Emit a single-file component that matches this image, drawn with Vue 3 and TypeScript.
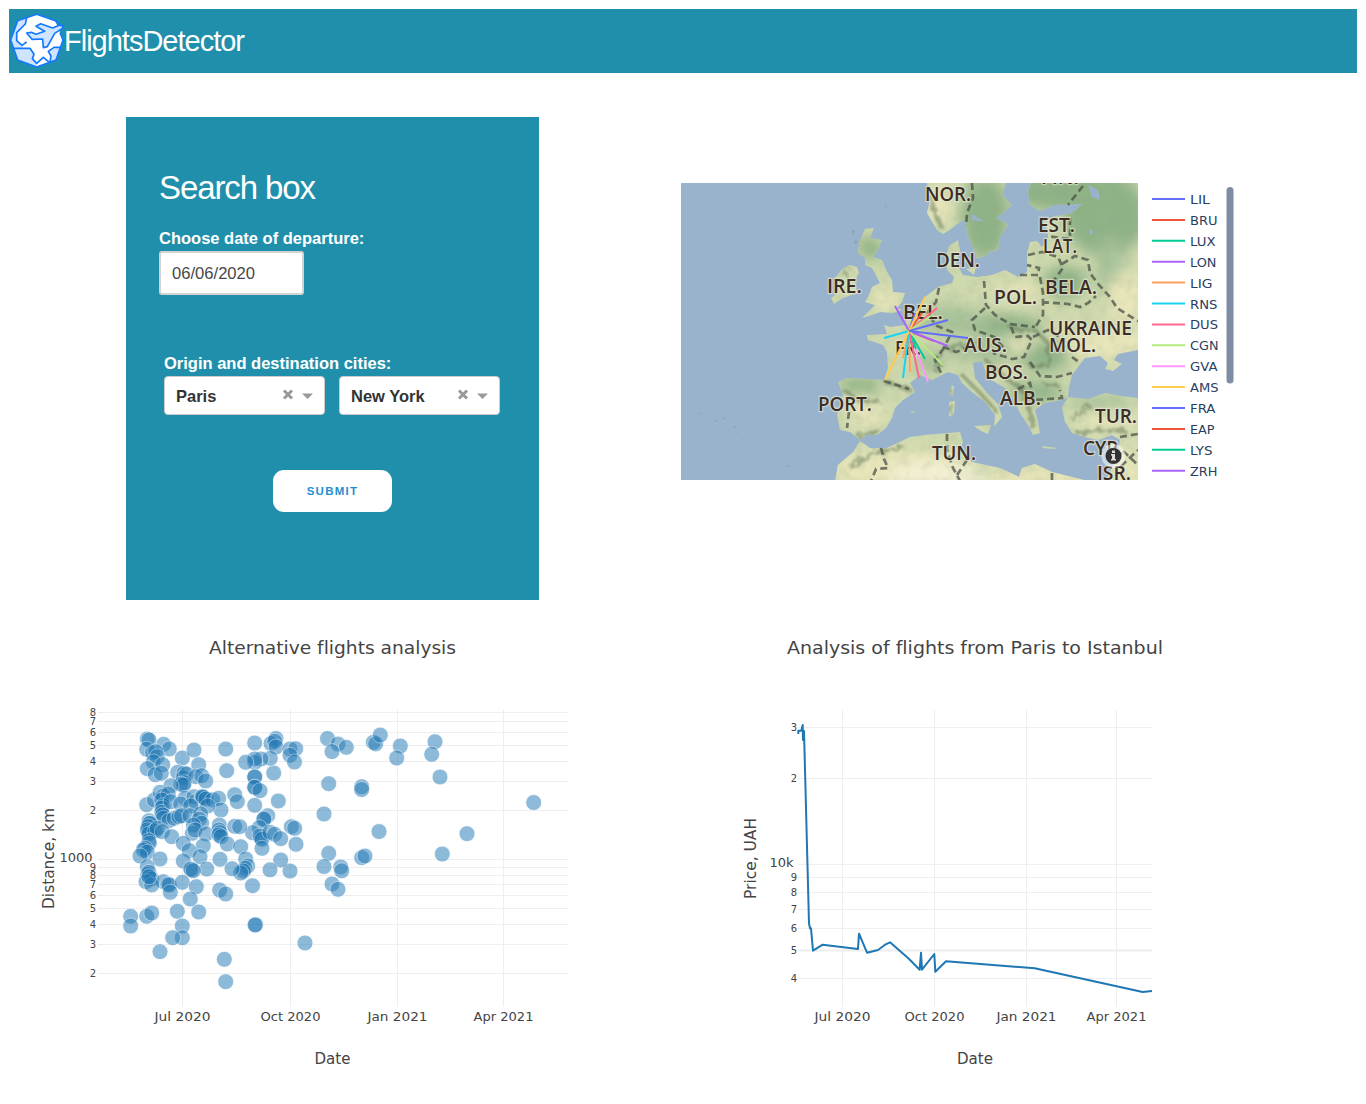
<script setup lang="ts">
interface Tick { label: string; at: number; width?: number }
interface Route { code: string; color: string; width: number }
interface MapLabel { text: string; x: number; y: number; w: number }

const palette = ['#636efa', '#ef553b', '#00cc96', '#ab63fa', '#ffa15a', '#19d3f3', '#ff6692', '#b6e880', '#ff97ff', '#fecb52']

const codes: [string, number][] = [
  ['LIL', 20], ['BRU', 27.5], ['LUX', 25.5], ['LON', 26.5], ['LIG', 22.5], ['RNS', 27.5], ['DUS', 28],
  ['CGN', 28.5], ['GVA', 27.5], ['AMS', 28.5], ['FRA', 25.5], ['EAP', 24.5], ['LYS', 22.5], ['ZRH', 27.5],
]
const routes: Route[] = codes.map(([code, width], i) => ({ code, width, color: palette[i % palette.length] }))

const rays: [number, number, string][] = [
  [915, 313, '#636efa'], [922, 313, '#ef553b'], [925, 359, '#00cc96'], [895, 306, '#ab63fa'],
  [903, 358, '#ffa15a'], [884, 338, '#19d3f3'], [937, 308, '#ff6692'], [932, 315, '#b6e880'],
  [928, 382, '#ff97ff'], [925, 297, '#fecb52'], [948, 320, '#636efa'], [934, 341, '#ef553b'],
  [916, 349, '#00cc96'], [948, 346, '#ab63fa'], [910, 372, '#ffa15a'], [903, 378, '#19d3f3'],
  [919, 378, '#ff6692'], [943, 365, '#b6e880'], [885, 380, '#fecb52'], [968, 338, '#636efa'],
]

const mapLabels: MapLabel[] = [
  { text: 'FIN.', x: 1041, y: 184, w: 38 },
  { text: 'NOR.', x: 925, y: 201, w: 46 }, { text: 'EST.', x: 1038, y: 232, w: 37 },
  { text: 'LAT.', x: 1043, y: 253, w: 34 }, { text: 'DEN.', x: 936, y: 267, w: 44 },
  { text: 'IRE.', x: 827, y: 293, w: 35 }, { text: 'POL.', x: 994, y: 304, w: 43 },
  { text: 'BELA.', x: 1045, y: 294, w: 52 }, { text: 'BEL.', x: 903, y: 319, w: 40 },
  { text: 'UKRAINE', x: 1049, y: 335, w: 83 }, { text: 'MOL.', x: 1049, y: 352, w: 47 },
  { text: 'FR.', x: 895, y: 355, w: 26 }, { text: 'AUS.', x: 964, y: 352, w: 43 },
  { text: 'BOS.', x: 985, y: 379, w: 43 }, { text: 'ALB.', x: 1000, y: 405, w: 41 },
  { text: 'PORT.', x: 818, y: 411, w: 54 }, { text: 'TUR.', x: 1095, y: 423, w: 42 },
  { text: 'TUN.', x: 932, y: 460, w: 44 }, { text: 'CYP.', x: 1083, y: 455, w: 40 },
  { text: 'ISR.', x: 1097, y: 480, w: 34 },
]

const scatterX: Tick[] = [
  { label: 'Jul 2020', at: 182.5, width: 56 }, { label: 'Oct 2020', at: 290.5, width: 60 },
  { label: 'Jan 2021', at: 397.5, width: 60 }, { label: 'Apr 2021', at: 503.5, width: 60 },
]
const scatterY: Tick[] = [
  { label: '8', at: 712.5 }, { label: '7', at: 721.5 }, { label: '6', at: 732.5 }, { label: '5', at: 745.5 },
  { label: '4', at: 761.5 }, { label: '3', at: 781.5 }, { label: '2', at: 810.5 }, { label: '1000', at: 859.5 },
  { label: '9', at: 867.5 }, { label: '8', at: 875.5 }, { label: '7', at: 884.5 }, { label: '6', at: 895.5 },
  { label: '5', at: 908.5 }, { label: '4', at: 924.5 }, { label: '3', at: 944.5 }, { label: '2', at: 973.5 },
]
const priceX: Tick[] = [
  { label: 'Jul 2020', at: 842.5, width: 56 }, { label: 'Oct 2020', at: 934.5, width: 60 },
  { label: 'Jan 2021', at: 1026.5, width: 60 }, { label: 'Apr 2021', at: 1116.5, width: 60 },
]
const priceY: Tick[] = [
  { label: '3', at: 727.5 }, { label: '2', at: 778.5 }, { label: '10k', at: 864.5 }, { label: '9', at: 877.5 },
  { label: '8', at: 892.5 }, { label: '7', at: 909.5 }, { label: '6', at: 928.5 }, { label: '5', at: 950.5 },
  { label: '4', at: 978.5 },
]

const points: [number, number][] = [
  [147.3, 739], [149, 740], [163.7, 744.3], [169.3, 749], [146.7, 749.3], [152.7, 752.7], [155.7, 751.7],
  [157.3, 756.7], [153.3, 762], [162.7, 764.7], [147.3, 768.7], [155.3, 774.7], [161.3, 773.3], [182.3, 758],
  [194, 750], [198.7, 764.7], [225.7, 749], [226.7, 770.7], [177.7, 772.3], [184, 773.3], [183.3, 777.7],
  [186.7, 774], [195.7, 776.7], [201.7, 775.7], [205.7, 781], [184.3, 782.7], [181, 784.3], [183.5, 785],
  [171, 785.7], [146.7, 804.7], [154.3, 800], [160, 792.3], [163.3, 796], [168.3, 794], [161.7, 800],
  [163.3, 805.7], [162, 808], [161.7, 812.3], [162.7, 815], [163.3, 818.3], [169, 820.7], [171, 801.7],
  [185, 798.3], [194, 796.7], [195.7, 801.7], [202.3, 796.7], [202.3, 796.7], [203.3, 797.3], [206, 799],
  [212.7, 799.8], [218.7, 798.3], [221, 810], [207.7, 806], [180.7, 804], [190.7, 806], [174.3, 818.3],
  [179, 816.7], [181.7, 815.7], [190, 815.7], [200.7, 814], [199.3, 819.3], [201.7, 823.3], [193.3, 825],
  [149, 820.7], [150, 823.3], [149.5, 823.5], [148.3, 826.7], [149, 831.7], [147.3, 830], [149, 834],
  [155, 831], [157.3, 828.3], [162.3, 831.7], [171.7, 836.7], [192.3, 833.3], [195, 830], [206, 834],
  [219.3, 825], [219, 830], [220, 832.7], [219, 835], [221, 836.7], [227.3, 844], [203.3, 845.7],
  [183.3, 843.3], [149, 840.7], [149.3, 843.3], [145, 848.3], [143.3, 850], [147.3, 852.3], [140, 856],
  [160, 859], [189.3, 850.7], [183.3, 861], [200, 856.7], [220, 859.3], [191.7, 870], [190.7, 869],
  [206.7, 869], [147.3, 866.7], [147.7, 874.3], [149, 872.3], [151.7, 879], [193.3, 870.7], [163.3, 881.7],
  [168, 884.3], [169.3, 885], [170.3, 892.3], [182.3, 882.3], [196.3, 886.7], [146, 881.7], [151.7, 885],
  [149, 876.7], [190.3, 899], [219.7, 890], [225.7, 894], [130.7, 916.3], [130.7, 926], [146.7, 916.3],
  [151.7, 913], [177.3, 911.3], [198.7, 912], [182.3, 926], [182.3, 937.7], [172.7, 937.7], [160, 951.7],
  [224.3, 959.3], [225.7, 981.7], [255.7, 924.7], [255, 925], [305, 943],
  [254.7, 743], [276, 738.5], [271, 743.5], [274.7, 741.3], [276, 747], [290, 749], [295.7, 748.7],
  [290, 755.3], [294.5, 762], [327.5, 738.5], [338, 744], [346.3, 747.3], [332, 751.6], [373.3, 742.3],
  [375.7, 743.8], [380.3, 735], [400.3, 746], [396.7, 758], [435, 741.7], [431.7, 754.3], [440, 777],
  [533.7, 802.5], [467, 833.7], [442.3, 854], [328.7, 783.7], [361.7, 786.7], [361.7, 789.5], [324, 814],
  [379, 831.5], [328.7, 853.3], [324, 866.5], [340.7, 867], [341.7, 870.8], [361.7, 857.7], [365, 856],
  [332, 884], [338, 889.3], [291.3, 826.7], [294.7, 828.3], [296, 844.3], [290, 871], [280.7, 860],
  [270, 869.8], [252.5, 885.7], [278.3, 801], [273.7, 773], [270.3, 758.3], [261, 759], [254.7, 762.3],
  [254.7, 759], [245.7, 762.3], [254.7, 777], [254.7, 777], [254.7, 787.3], [254.7, 787.3], [260, 790.7],
  [254.7, 805.3], [234.7, 794.7], [237.3, 801.7], [267.7, 815.7], [264.3, 818.5], [263.7, 819.3],
  [259.3, 827.7], [252.5, 832.7], [261, 837.7], [260, 836], [262, 839.3], [270, 832.3], [274.7, 834.3],
  [280.7, 838.7], [262, 848.3], [240.7, 846.7], [234.7, 826.3], [239.7, 826.7], [245.7, 859], [247.7, 866],
  [245, 868.3], [243.3, 871], [240.7, 873], [232, 868.7],
]

const priceLine =
  '798.3,734 798.3,730.7 801.3,730.7 802.7,725 803,740 804,731 809,923.3 810,928.3 811,928.3 813,950.7 822.7,944.7 858,949 859,933.7 867,952.7 878,950 885.7,944.3 890,942.3 908.3,958.3 919.7,969.7 921,952.7 922,969.7 934.3,954 935.3,971.7 946,961.3 1034.7,968.3 1142.7,992 1152,991'

const isMajor = (t: Tick) => t.label.length > 1
</script>

<template>
  <div class="page">
    <header class="topbar">
      <svg class="logo" width="56" height="56" viewBox="27 39 168 168">
        <path d="M110 43L166 62L189 120L168 180L110 201L53 180L32 120L53 62Z" fill="#fff" />
        <path d="M53 62L80 53L76 72L50 98V122L66 136L68 145H90L102 163L97 176L110 190V201L53 180L32 120Z" fill="#cfe4ff" />
        <path d="M184 138L162 146L145 154L153 168L150 187L168 180Z" fill="#cfe4ff" />
        <g fill="none" stroke="#1479ff" stroke-width="5" stroke-linejoin="round">
          <path d="M178 76L166 62L110 43L53 62L32 120L53 180L110 201L168 180L189 120L180 98" />
          <path d="M80 53L76 72L50 98V122L66 136L80 126M38 145H90L102 163L97 176L110 190L130 172L148 187M182 142H162L145 154L153 168L150 187" />
          <path d="M80 99L94 97L108 103L134 94L108 79L122 71L158 84L178 76L190 77L186 86L164 100L142 140L130 143L128 117L96 118Z" fill="#cfe4ff" />
        </g>
      </svg>
      <h1>FlightsDetector</h1>
    </header>

    <main>
      <section class="row-top">
        <form class="search" @submit.prevent>
          <h2>Search box</h2>
          <label class="caption">Choose date of departure:</label>
          <div class="date">06/06/2020</div>
          <div class="cities">
            <label class="caption">Origin and destination cities:</label>
            <div class="selects">
              <div v-for="city in ['Paris', 'New York']" :key="city" class="select">
                <span class="value">{{ city }}</span>
                <svg width="36" height="14" viewBox="0 0 36 14">
                  <path d="M2 2.500L10 10.500M10 2.500L2 10.500" stroke="#999" stroke-width="3" />
                  <path d="M20 5.500H31L25.500 11Z" fill="#999" />
                </svg>
              </div>
            </div>
          </div>
          <button type="submit">Submit</button>
        </form>

        <svg class="map" width="559" height="297" viewBox="681 183 559 297">
          <defs>
            <clipPath id="frame"><rect x="681" y="183" width="457" height="297" /></clipPath>
            <clipPath id="land">
              <path d="M865 229L874 228L870 238L882 240L877 252L873 257L882 260L887 272L892 280L893 292L905 293L902 302L897 308L902 310L893 313L880 312L872 315L862 318L870 310L875 305L865 302L868 297L872 287L880 283L877 277L872 268L865 265L865 258L858 253L859 243Z" />
              <path d="M843 268L850 265L857 267L859 273L855 280L857 293L843 298L834 304L831 298L837 293L834 286L835 278Z" />
              <path d="M928 187L930 200L927 213L937 230L943 234L951 229L960 222L965 220L968 237L975 252L977 259L987 255L990 251L998 250L1000 237L1008 224L996 218L1003 213L1012 205L1002 195L1007 180H926Z" />
              <path d="M884 325L890 327L905 325L906 320L917 311L925 297L938 287L952 283L954 277L947 270L946 256L949 246L958 240L960 250L956 263L963 275L977 277L992 275L1005 270L1018 277L1027 272L1027 253L1030 242L1037 241L1042 247L1048 238L1047 229L1042 223L1052 217L1072 213L1082 204L1055 205L1040 211L1030 205L1028 192L1032 180H1140V482H1105L1112 468L1118 452L1120 440L1112 435L1099 440L1088 438L1072 433L1065 422L1062 407L1068 397L1062 400L1045 403L1035 410L1038 422L1040 433L1033 435L1028 425L1020 413L1015 402L1005 388L988 378L982 361L973 363L975 378L987 393L998 404L1002 417L994 427L995 415L985 402L972 392L962 383L958 375L948 372L932 380L920 375L910 383L915 392L903 400L895 408L892 418L886 428L877 435L867 435L860 440L850 432L840 430L837 415L843 395L838 382L847 378L884 380L888 368L887 352L883 345L868 340L867 335L887 334Z" />
              <path d="M835 481L838 465L853 452L860 441L870 448L887 448L910 437L925 435L948 433L960 432L963 442L959 451L972 462L1000 468L1019 477L1022 468L1035 464L1052 472L1092 482Z" />
              <path d="M952 385L954 387L953 396L949 393ZM949 402L955 401L954 414L949 417ZM974 426L991 425L988 434L981 431ZM966 269L976 267L974 275ZM1042 446L1057 448L1054 449L1043 448ZM910 411L916 412L913 413ZM1103 446L1118 441L1112 450Z" />
            </clipPath>
            <filter id="soft" x="-40%" y="-40%" width="180%" height="180%"><feGaussianBlur stdDeviation="7" /></filter>
            <filter id="ridge" x="-20%" y="-20%" width="140%" height="140%">
              <feTurbulence type="fractalNoise" baseFrequency="0.16" numOctaves="2" seed="5" result="n" />
              <feDisplacementMap in="SourceGraphic" in2="n" scale="12" />
              <feGaussianBlur stdDeviation=".8" />
            </filter>
            <filter id="relief" x="0" y="0" width="100%" height="100%">
              <feTurbulence type="fractalNoise" baseFrequency="0.09" numOctaves="4" seed="8" />
              <feColorMatrix values="0 0 0 0 .3  0 0 0 0 .4  0 0 0 0 .25  1.6 0 0 0 -.68" />
            </filter>
          </defs>

          <g clip-path="url(#frame)">
            <rect x="681" y="183" width="457" height="297" fill="#99b3cc" />
            <g clip-path="url(#land)">
              <rect x="681" y="183" width="457" height="297" fill="#cfd9ae" />
              <g filter="url(#soft)">
                <g fill="#8fb286">
                  <ellipse cx="985" cy="218" rx="24" ry="42" />
                  <ellipse cx="1060" cy="190" rx="50" ry="22" />
                  <ellipse cx="1105" cy="215" rx="42" ry="42" />
                  <ellipse cx="870" cy="248" rx="12" ry="12" />
                  <ellipse cx="1065" cy="282" rx="22" ry="16" />
                  <ellipse cx="1000" cy="325" rx="45" ry="10" />
                  <ellipse cx="1045" cy="357" rx="24" ry="15" />
                  <ellipse cx="860" cy="385" rx="22" ry="8" />
                  <ellipse cx="1035" cy="392" rx="28" ry="10" />
                </g>
                <g fill="#a8c29a">
                  <ellipse cx="1110" cy="272" rx="14" ry="35" />
                  <ellipse cx="950" cy="320" rx="34" ry="15" />
                  <ellipse cx="990" cy="350" rx="44" ry="13" />
                  <ellipse cx="1100" cy="402" rx="32" ry="7" />
                  <ellipse cx="930" cy="362" rx="15" ry="12" />
                </g>
                <g fill="#e8e5ba">
                  <ellipse cx="938" cy="205" rx="13" ry="20" />
                  <ellipse cx="1128" cy="298" rx="22" ry="26" />
                  <ellipse cx="1115" cy="345" rx="50" ry="15" />
                  <ellipse cx="1020" cy="292" rx="28" ry="8" />
                  <ellipse cx="1018" cy="345" rx="13" ry="7" />
                  <ellipse cx="885" cy="300" rx="12" ry="12" />
                  <ellipse cx="868" cy="415" rx="18" ry="12" />
                  <ellipse cx="900" cy="470" rx="70" ry="22" />
                  <ellipse cx="1040" cy="478" rx="60" ry="12" />
                  <ellipse cx="1110" cy="422" rx="32" ry="9" />
                  <ellipse cx="1130" cy="470" rx="14" ry="25" />
                </g>
                <ellipse cx="935" cy="475" rx="50" ry="14" fill="#f3efd2" />
              </g>
              <rect x="681" y="183" width="457" height="297" filter="url(#relief)" opacity=".28" />
              <g filter="url(#ridge)" fill="none" stroke="#65795a" stroke-opacity=".5" stroke-width="4">
                <path d="M884 382L910 389M935 372L938 355L955 346L978 344M983 358L1008 380L1022 388L1030 412L1034 430M960 373L980 393L995 410M1008 328L1035 330L1050 345L1048 365L1030 367M843 390L860 400L880 402M857 437L880 431M850 468L875 452L905 447M1075 433L1105 430L1128 432M930 195L935 215L942 228" />
                <path d="M842 274L849 267M1042 383L1060 386M1072 420L1090 405M952 388V394M952 404V416M1018 388L1032 400" stroke-width="3" />
              </g>
            </g>
            <path d="M1068 397L1069 387L1072 375L1085 358L1100 356L1108 363L1105 369L1113 371L1122 364L1114 360L1118 354L1138 350V398L1122 396L1105 393L1088 399Z" fill="#99b3cc" />
            <path d="M1088 185L1098 190L1100 200L1092 197ZM1089 229L1094 232L1090 235ZM972 214L985 222L972 220Z" fill="#99b3cc" />
            <g fill="#849a9e" opacity=".7">
              <path d="M698 413h2v1h-2zM715 420l3 1-2 1zM723 418h2v1h-2zM733 426l4 1-2 1zM737 432h1v1h-1zM787 465l4 1-3 1zM885 205l2 1-1 2zM852 231l3-1-2 5zM854 240l4 2-3 2z" />
            </g>
            <g class="borders">
              <path d="M972 183L973 198L967 213L966 226" />
              <path d="M1083 186L1075 196L1068 205M1070 218L1070 239L1062 238L1047 236" />
              <path d="M1028 255L1042 252L1058 257L1063 268L1054 280M1020 275L1038 275L1039 268L1027 265M1062 264L1075 256L1088 260L1090 273L1099 285L1110 297L1117 308L1128 315L1138 321" />
              <path d="M1040 277L1043 293L1043 315L1036 326M1042 302L1068 304L1080 307L1088 303L1096 296M984 281L986 305L995 315L1010 324L1035 327M985 308L972 320L975 330L994 337L1004 348M939 288L936 302L927 313L937 326L952 332L944 347L956 352L972 346" />
              <path d="M1011 327L1015 337L1028 336L1032 340L1024 357L1012 359L993 353M1033 337L1048 330L1060 337M1030 362L1040 376L1057 377L1072 373M1018 389L1030 383L1034 400L1048 399L1062 398L1060 390M1072 357L1080 363M944 348L935 360L941 373M884 381L909 389M849 412L847 428" />
              <path d="M947 434L947 450L953 468L960 481M967 460L957 475M881 448L884 459L888 468L876 469L871 481M1052 473V480M1120 437L1138 434M1123 451L1138 465M1121 466L1138 450" />
            </g>
            <g class="map-labels">
              <text v-for="l in mapLabels" :key="l.text" :x="l.x" :y="l.y" :textLength="l.w" lengthAdjust="spacingAndGlyphs">{{ l.text }}</text>
            </g>
            <g stroke-width="2">
              <line v-for="(r, i) in rays" :key="i" x1="909" y1="331" :x2="r[0]" :y2="r[1]" :stroke="r[2]" />
            </g>
            <circle cx="1113.500" cy="456" r="12" fill="#fff" opacity=".5" />
            <circle cx="1113.500" cy="456" r="8" fill="#333" />
            <path d="M1112 450.500h3v2.500h-3zM1111 454h4v5h1v1.500h-5v-1.500h1v-3.500h-1z" fill="#ddd" />
          </g>

          <g v-for="(r, i) in routes" :key="r.code">
            <line x1="1152" x2="1185" :y1="199 + i * 20.9" :y2="199 + i * 20.9" :stroke="r.color" stroke-width="2" />
            <text class="legend" x="1190" :y="203.900 + i * 20.920" :textLength="r.width" lengthAdjust="spacingAndGlyphs">{{ r.code }}</text>
          </g>
          <rect x="1226.500" y="187" width="7" height="196.500" rx="3.500" fill="#808ba4" />
        </svg>
      </section>

      <section class="row-charts">
        <svg width="674" height="490" viewBox="9 614 674 490" class="chart">
          <text class="title" x="332.500" y="654" textLength="247" lengthAdjust="spacingAndGlyphs">Alternative flights analysis</text>
          <g stroke="#eee">
            <line v-for="t in scatterX" :key="t.label" :x1="t.at" :x2="t.at" y1="710" y2="1006.500" />
            <line v-for="t in scatterY" :key="t.at" x1="98" x2="568" :y1="t.at" :y2="t.at" />
          </g>
          <text v-for="t in scatterY" :key="t.at" :class="['ytick', { major: isMajor(t) }]" :x="isMajor(t) ? 92.5 : 96" :y="t.at + (isMajor(t) ? 2.5 : 3.8)" :textLength="isMajor(t) ? 33 : undefined">{{ t.label }}</text>
          <text v-for="t in scatterX" :key="t.label" class="xtick" :x="t.at" y="1021" :textLength="t.width" lengthAdjust="spacingAndGlyphs">{{ t.label }}</text>
          <circle v-for="(p, i) in points" :key="i" class="dot" :cx="p[0]" :cy="p[1]" r="8" />
          <text class="axis" x="332.500" y="1064" textLength="36" lengthAdjust="spacingAndGlyphs">Date</text>
          <text class="axis" transform="translate(54 858.500) rotate(-90)" textLength="101" lengthAdjust="spacingAndGlyphs">Distance, km</text>
        </svg>

        <svg width="674" height="490" viewBox="683 614 674 490" class="chart">
          <text class="title" x="975" y="654" textLength="376" lengthAdjust="spacingAndGlyphs">Analysis of flights from Paris to Istanbul</text>
          <g stroke="#eee">
            <line v-for="t in priceX" :key="t.label" :x1="t.at" :x2="t.at" y1="710" y2="1006.500" />
            <line v-for="t in priceY" :key="t.at" x1="798" x2="1152" :y1="t.at" :y2="t.at" :stroke-width="t.label === '5' ? 2 : 1" />
          </g>
          <text v-for="t in priceY" :key="t.at" :class="['ytick', { major: isMajor(t) }]" :x="isMajor(t) ? 793.5 : 797" :y="t.at + (isMajor(t) ? 2.5 : 3.8)" :textLength="isMajor(t) ? 24 : undefined">{{ t.label }}</text>
          <text v-for="t in priceX" :key="t.label" class="xtick" :x="t.at" y="1021" :textLength="t.width" lengthAdjust="spacingAndGlyphs">{{ t.label }}</text>
          <polyline :points="priceLine" fill="none" stroke="#1f77b4" stroke-width="2" stroke-linejoin="round" />
          <text class="axis" x="975" y="1064" textLength="36" lengthAdjust="spacingAndGlyphs">Date</text>
          <text class="axis" transform="translate(756 858.500) rotate(-90)" textLength="81" lengthAdjust="spacingAndGlyphs">Price, UAH</text>
        </svg>
      </section>
    </main>
  </div>
</template>

<style>
body {
  margin: 0;
  background: #fff;
}
</style>

<style scoped>
.page {
  box-sizing: border-box;
  width: 1366px;
  height: 1104px;
  padding: 9px 9px 0;
  overflow: hidden;
  font-family: 'Liberation Sans', Arial, sans-serif;
}
.topbar {
  display: flex;
  align-items: center;
  height: 64px;
  background: #1f8fab;
  color: #fff;
}
.topbar h1 {
  margin: 0 0 0 -1px;
  font-size: 29px;
  line-height: 38px;
  font-weight: 400;
  letter-spacing: -1px;
}
.row-top {
  display: flex;
  align-items: flex-start;
  height: 541px;
}
.search {
  box-sizing: border-box;
  display: flex;
  flex-direction: column;
  align-items: flex-start;
  width: 413px;
  height: 483px;
  margin: 44px 0 0 117px;
  padding: 50px 33px 0;
  background: #1f8fab;
  color: #fff;
}
.search h2 {
  margin: 0 0 19px;
  font-size: 33px;
  line-height: 42px;
  font-weight: 400;
  letter-spacing: -1.1px;
}
.caption {
  display: block;
  font-size: 16.5px;
  line-height: 20px;
  font-weight: 700;
}
.date {
  box-sizing: border-box;
  width: 145px;
  height: 44px;
  margin-top: 3px;
  padding-left: 11px;
  border: 2px solid #d3d3d3;
  border-radius: 3px;
  background: #fff;
  color: #484848;
  font-size: 16.6px;
  line-height: 41px;
}
.cities {
  margin: 58px 0 0 5px;
}
.selects {
  display: flex;
  gap: 14px;
  margin-top: 3px;
}
.select {
  box-sizing: border-box;
  display: flex;
  align-items: center;
  justify-content: space-between;
  width: 161px;
  height: 39px;
  padding: 0 6px 1px 11px;
  border: 1px solid #ccc;
  border-radius: 4px;
  background: #fff;
  color: #333;
  font-size: 16.5px;
  line-height: 20px;
  font-weight: 700;
}
.value {
  padding-top: 1px;
}
.select svg {
  margin-bottom: 1px;
}
button {
  width: 119px;
  height: 42px;
  margin: 55px 0 0 114px;
  padding: 0;
  border: 0;
  border-radius: 11px;
  background: #fff;
  color: #1f8fcf;
  font: 700 11.5px/42px 'Liberation Sans', Arial, sans-serif;
  letter-spacing: 1.25px;
  text-transform: uppercase;
}
.map {
  display: block;
  margin: 110px 0 0 142px;
}
.borders path {
  fill: none;
  stroke: #4b5147;
  stroke-opacity: 0.75;
  stroke-width: 2.7;
  stroke-dasharray: 7 4;
}
.map-labels text {
  font: 600 20px 'Open Sans', 'Noto Sans', sans-serif;
  fill: #3b2d24;
  stroke: #e8e8d8;
  stroke-opacity: 0.65;
  stroke-width: 2.5;
  paint-order: stroke;
}
.legend {
  font: 13px 'DejaVu Sans', Verdana, sans-serif;
  fill: #2a3f5f;
}
.row-charts {
  display: grid;
  grid-template-columns: 674px 674px;
}
.chart {
  display: block;
  font-family: 'DejaVu Sans', Verdana, sans-serif;
  font-variant-ligatures: none;
  fill: #444;
}
.title,
.xtick,
.axis {
  text-anchor: middle;
}
.title {
  font-size: 18.5px;
}
.xtick {
  font-size: 13px;
}
.axis {
  font-size: 15px;
}
.ytick {
  font-size: 10px;
  text-anchor: end;
}
.ytick.major {
  font-size: 13px;
}
.dot {
  fill: #1f77b4;
  stroke: #fff;
  stroke-width: 0.8;
  opacity: 0.5;
}
</style>
